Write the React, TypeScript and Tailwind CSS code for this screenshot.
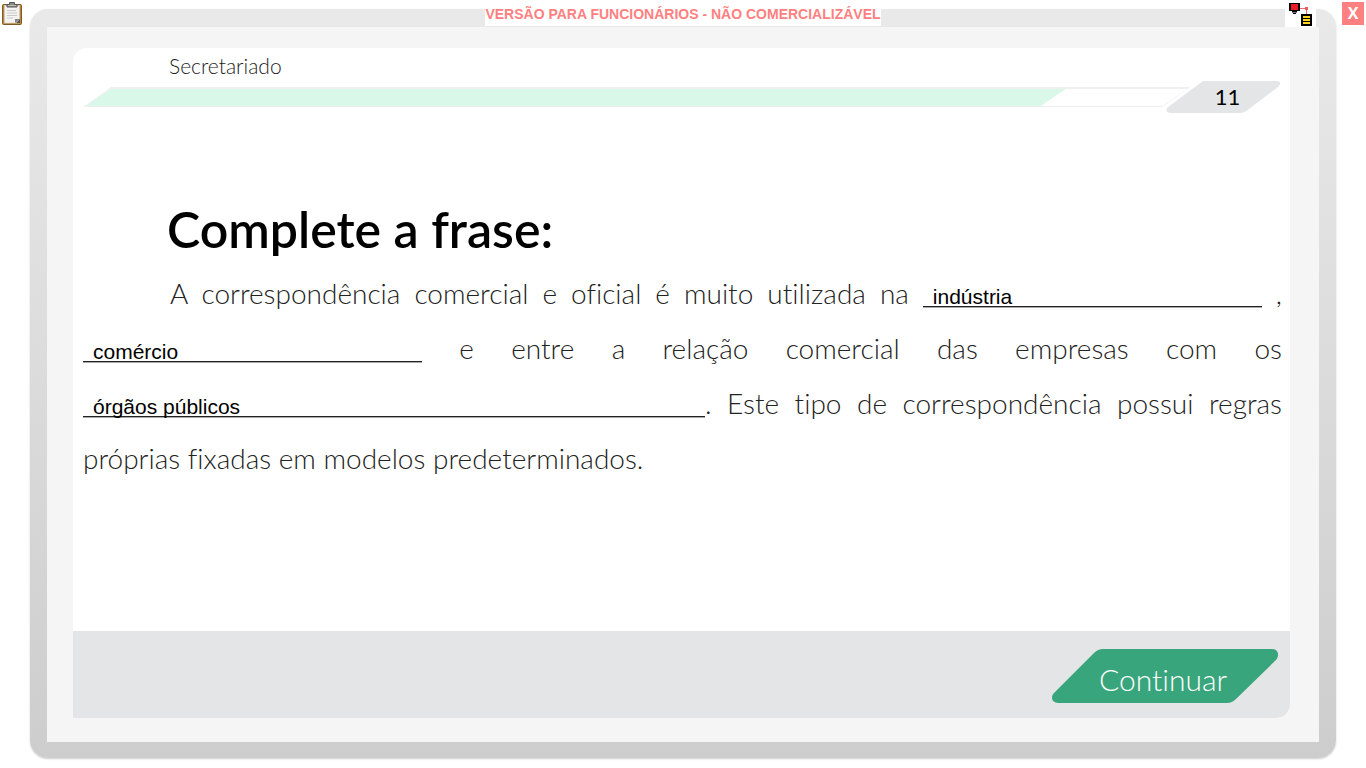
import { useState } from "react";

function ClipboardIcon() {
  return (
    <svg width="22" height="24" viewBox="0 0 22 24" aria-hidden="true">
      <rect x="0.5" y="2.5" width="19" height="20" rx="1" fill="#b9853b" stroke="#7d5a26" />
      <rect x="2.500" y="3.500" width="15" height="17.500" fill="#f3f3f3" stroke="#d5d0c8" strokeWidth="0.6" />
      <path d="M5 8.500h9M5 11h10M5 13.500h10M5 16h6" stroke="#c9c9c9" strokeWidth="1" />
      <path d="M13 21v-4h5z" fill="#858585" />
      <path d="M14 21l4-4v4z" fill="#555" />
      <path d="M5 5V2.500h2.500V0.500h5v2H15V5z" fill="#8b8d88" stroke="#555753" />
      <path d="M6 3.500h8" stroke="#bcc0b8" />
    </svg>
  );
}

function NetworkIcon() {
  return (
    <svg width="24" height="24" viewBox="0 0 24 24" shapeRendering="crispEdges" aria-hidden="true">
      <path d="M0 0h11v8H8v1H7v2H4V9H3V8H0z" fill="#000" />
      <rect x="2" y="1" width="7" height="6" fill="#ed1c24" />
      <path d="M3 9h5v1H3z" fill="#777" />
      <path d="M11 5h7M17 5v6" fill="none" stroke="#f06a70" strokeWidth="1" />
      <rect x="16" y="4" width="3" height="3" fill="#ed5c64" />
      <rect x="12" y="11" width="11" height="12" fill="#000" />
      <path d="M14 14h7M14 17h7M14 20h7" stroke="#ffd51e" strokeWidth="2" />
    </svg>
  );
}

function Blank({ label, initial, width }: { label: string; initial: string; width: string }) {
  const [value, setValue] = useState(initial);
  return (
    <input
      type="text"
      aria-label={label}
      value={value}
      onChange={(e) => setValue(e.target.value)}
      className={`${width} h-6 max-w-full bg-[linear-gradient(#222_50%,#aaa_50%)] bg-[length:100%_2px] bg-[position:0_21px] bg-no-repeat pl-[10px] indent-0 font-['Liberation_Sans',sans-serif] text-[21px] leading-[24px] text-black outline-none`}
    />
  );
}

function LessonHeader() {
  return (
    <header className="pr-[9px] pl-[10px]">
      <p className="pt-[6px] pb-px pl-[86px] text-[21px] leading-[24px] font-light text-[#222]">Secretariado</p>
      <div className="mt-[2px] flex items-center">
        <div className="h-5 flex-1 bg-[#efefef] [clip-path:polygon(28px_0,100%_0,calc(100%-28px)_100%,0_100%)]">
          <div className="h-full pt-[2px] pr-[3px] pb-px pl-[2px]">
            <div className="h-full bg-white [clip-path:polygon(25px_0,100%_0,calc(100%-25px)_100%,0_100%)]">
              <div className="h-full w-[89%] bg-[#d9f8ea] [clip-path:polygon(25px_0,100%_0,calc(100%-25px)_100%,0_100%)]" />
            </div>
          </div>
        </div>
        <div className="-ml-[24px] grid h-8 w-[115px]">
          <svg className="col-start-1 row-start-1" width="115" height="32" viewBox="0 0 115 32" aria-hidden="true">
            <path d="M38 0H111Q117 1 112 6L83 28Q78 32 74 32H4Q-2 30 2 26L33 3Q36 0 38 0Z" fill="#e4e5e7" />
          </svg>
          <span className="col-start-1 row-start-1 self-center pl-[8px] text-center text-[22px] leading-[32px] text-black">11</span>
        </div>
      </div>
    </header>
  );
}

export default function App() {
  return (
    <div className="relative flex min-h-screen flex-col bg-white px-[30px] pt-[9px] pb-[10px] font-[Lato,sans-serif] [font-variant-ligatures:none]">
      <button type="button" aria-label="Notas" className="absolute top-[2px] left-[2px]">
        <ClipboardIcon />
      </button>
      <div className="absolute inset-x-0 top-0 flex justify-center">
        <p className="bg-white pt-[4px] pb-[2px] font-['Liberation_Sans',sans-serif] text-[14px] leading-[20px] font-bold text-[#ff8080]">
          VERSÃO PARA FUNCIONÁRIOS - NÃO COMERCIALIZÁVEL
        </p>
      </div>
      <button type="button" aria-label="Rede" className="absolute top-0 right-[50px] bg-white pt-[3px] pr-[3px] pl-[4px]">
        <NetworkIcon />
      </button>
      <button
        type="button"
        aria-label="Fechar"
        className="absolute top-[2px] right-[2px] h-[23px] w-[22px] bg-[#ff8080] font-['Open_Sans',sans-serif] text-[16px] leading-[23px] font-bold text-white"
      >
        X
      </button>

      <div className="flex flex-1 flex-col rounded-[18px] bg-linear-to-b from-[#e9e9e9] to-[#cdcdcd] px-[17px] pt-[18px] pb-[16px] shadow-[0_1px_2px_#ccc]">
        <div className="flex flex-1 flex-col bg-[#f5f5f5] pt-[21px] pr-[29px] pb-[24px] pl-[26px]">
          <div className="flex flex-1 flex-col rounded-tl-[14px] rounded-br-[14px] bg-white">
            <LessonHeader />
            <main className="flex-1 pt-[86px] pr-[8px] pl-[10px]">
              <h1 className="pl-[84px] text-[50px] leading-[60px] font-semibold text-black">Complete a frase:</h1>
              <p className="pt-[7px] text-justify indent-[87px] text-[28px] leading-[55px] font-light text-[#222]">
                A correspondência comercial e oficial é muito utilizada na{" "}
                <Blank label="Primeira lacuna" initial="indústria" width="w-[339px]" /> ,{" "}
                <Blank label="Segunda lacuna" initial="comércio" width="w-[339px]" /> e entre a relação comercial das
                empresas com os <Blank label="Terceira lacuna" initial="órgãos públicos" width="w-[622px]" />. Este tipo de
                correspondência possui regras próprias fixadas em modelos predeterminados.
              </p>
            </main>
            <footer className="flex items-start justify-end rounded-br-[14px] bg-[#e4e5e7] pt-[18px] pr-[12px] pb-[15px]">
              <button type="button" className="grid h-[54px] w-[226px]">
                <svg className="col-start-1 row-start-1" width="226" height="54" viewBox="0 0 226 54" aria-hidden="true">
                  <path d="M51 0H220C226 0 228 6 224 11L184 50Q180 54 175 54H6C0 54 -2 48 2 44L42 4Q46 0 51 0Z" fill="#39a57c" />
                </svg>
                <span className="col-start-1 row-start-1 self-center pt-[6px] pr-[4px] text-[30px] leading-[40px] font-light text-white">Continuar</span>
              </button>
            </footer>
          </div>
        </div>
      </div>
    </div>
  );
}
